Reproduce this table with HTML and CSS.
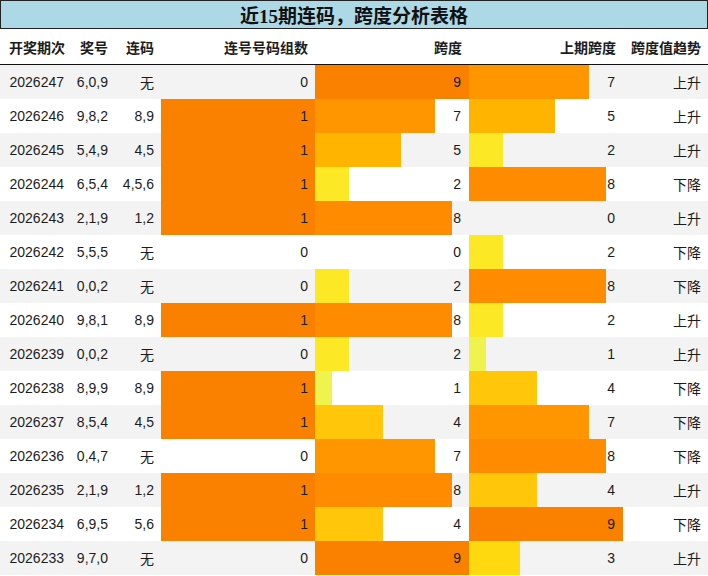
FILE: index.html
```html
<!DOCTYPE html>
<html lang="zh">
<head>
<meta charset="utf-8">
<title>近15期连码，跨度分析表格</title>
<link rel="stylesheet" href="styles.css">
</head>
<body>
<div class="title">近15期连码，跨度分析表格</div>
<table class="grid">
  <colgroup>
    <col class="w-issue"><col class="w-num"><col class="w-lian"><col class="w-bar"><col class="w-bar"><col class="w-bar"><col class="w-trend">
  </colgroup>
  <thead>
    <tr><th>开奖期次</th><th>奖号</th><th>连码</th><th>连号号码组数</th><th>跨度</th><th>上期跨度</th><th>跨度值趋势</th></tr>
  </thead>
  <tbody>
    <tr><td>2026247</td><td>6,0,9</td><td>无</td><td class="bar">0</td><td class="bar c9" style="--w:100%">9</td><td class="bar c7" style="--w:77.78%">7</td><td>上升</td></tr>
    <tr><td>2026246</td><td>9,8,2</td><td>8,9</td><td class="bar c9" style="--w:100%">1</td><td class="bar c7" style="--w:77.78%">7</td><td class="bar c5" style="--w:55.56%">5</td><td>上升</td></tr>
    <tr><td>2026245</td><td>5,4,9</td><td>4,5</td><td class="bar c9" style="--w:100%">1</td><td class="bar c5" style="--w:55.56%">5</td><td class="bar c2" style="--w:22.22%">2</td><td>上升</td></tr>
    <tr><td>2026244</td><td>6,5,4</td><td>4,5,6</td><td class="bar c9" style="--w:100%">1</td><td class="bar c2" style="--w:22.22%">2</td><td class="bar c8" style="--w:88.89%">8</td><td>下降</td></tr>
    <tr><td>2026243</td><td>2,1,9</td><td>1,2</td><td class="bar c9" style="--w:100%">1</td><td class="bar c8" style="--w:88.89%">8</td><td class="bar">0</td><td>上升</td></tr>
    <tr><td>2026242</td><td>5,5,5</td><td>无</td><td class="bar">0</td><td class="bar">0</td><td class="bar c2" style="--w:22.22%">2</td><td>下降</td></tr>
    <tr><td>2026241</td><td>0,0,2</td><td>无</td><td class="bar">0</td><td class="bar c2" style="--w:22.22%">2</td><td class="bar c8" style="--w:88.89%">8</td><td>下降</td></tr>
    <tr><td>2026240</td><td>9,8,1</td><td>8,9</td><td class="bar c9" style="--w:100%">1</td><td class="bar c8" style="--w:88.89%">8</td><td class="bar c2" style="--w:22.22%">2</td><td>上升</td></tr>
    <tr><td>2026239</td><td>0,0,2</td><td>无</td><td class="bar">0</td><td class="bar c2" style="--w:22.22%">2</td><td class="bar c1" style="--w:11.11%">1</td><td>上升</td></tr>
    <tr><td>2026238</td><td>8,9,9</td><td>8,9</td><td class="bar c9" style="--w:100%">1</td><td class="bar c1" style="--w:11.11%">1</td><td class="bar c4" style="--w:44.44%">4</td><td>下降</td></tr>
    <tr><td>2026237</td><td>8,5,4</td><td>4,5</td><td class="bar c9" style="--w:100%">1</td><td class="bar c4" style="--w:44.44%">4</td><td class="bar c7" style="--w:77.78%">7</td><td>下降</td></tr>
    <tr><td>2026236</td><td>0,4,7</td><td>无</td><td class="bar">0</td><td class="bar c7" style="--w:77.78%">7</td><td class="bar c8" style="--w:88.89%">8</td><td>下降</td></tr>
    <tr><td>2026235</td><td>2,1,9</td><td>1,2</td><td class="bar c9" style="--w:100%">1</td><td class="bar c8" style="--w:88.89%">8</td><td class="bar c4" style="--w:44.44%">4</td><td>上升</td></tr>
    <tr><td>2026234</td><td>6,9,5</td><td>5,6</td><td class="bar c9" style="--w:100%">1</td><td class="bar c4" style="--w:44.44%">4</td><td class="bar c9" style="--w:100%">9</td><td>下降</td></tr>
    <tr><td>2026233</td><td>9,7,0</td><td>无</td><td class="bar">0</td><td class="bar c9" style="--w:100%">9</td><td class="bar c3" style="--w:33.33%">3</td><td>上升</td></tr>
  </tbody>
</table>
</body>
</html>
```

FILE: styles.css
```css
html, body {
  margin: 0;
  padding: 0;
  background: #ffffff;
}

body {
  width: 708px;
  font-family: "Liberation Sans", "Noto Sans CJK SC", sans-serif;
  color: #1c1c1c;
}

.title {
  box-sizing: border-box;
  height: 29px;
  border: 1px solid #222;
  background: #add8e6;
  display: flex;
  align-items: center;
  justify-content: center;
  font-family: "Liberation Serif", "Noto Sans CJK SC", serif;
  font-weight: bold;
  font-size: 19px;
  color: #111;
}

.grid {
  width: 708px;
  border-collapse: collapse;
  table-layout: fixed;
  font-size: 14px;
}

.w-issue { width: 71px; }
.w-num { width: 44px; }
.w-lian { width: 46px; }
.w-bar { width: 154px; }
.w-trend { width: 85px; }

.grid th {
  height: 35px;
  padding: 0 7px 0 0;
  text-align: right;
  font-weight: bold;
  border-bottom: 1px solid #111;
  white-space: nowrap;
}

.grid th:first-child {
  padding-right: 6px;
}

.grid td {
  height: 34px;
  padding: 0 7px 0 0;
  text-align: right;
  white-space: nowrap;
  vertical-align: middle;
}

.grid td:first-child {
  padding-right: 7px;
}

.grid tbody tr:nth-child(odd) {
  background: #f3f3f3;
}

.grid tbody tr:nth-child(even) {
  background: #ffffff;
}

.bar {
  --w: 0%;
  --c: transparent;
  background: linear-gradient(90deg, var(--c) var(--w), transparent var(--w));
}

.grid td.bar:nth-child(5),
.grid td.bar:nth-child(6) {
  padding-right: 8px;
}

.c1 { --c: #eff34d; }
.c2 { --c: #fde825; }
.c3 { --c: #ffd90f; }
.c4 { --c: #ffc60a; }
.c5 { --c: #ffb400; }
.c7 { --c: #ff9600; }
.c8 { --c: #ff8b00; }
.c9 { --c: #fa8000; }
```
